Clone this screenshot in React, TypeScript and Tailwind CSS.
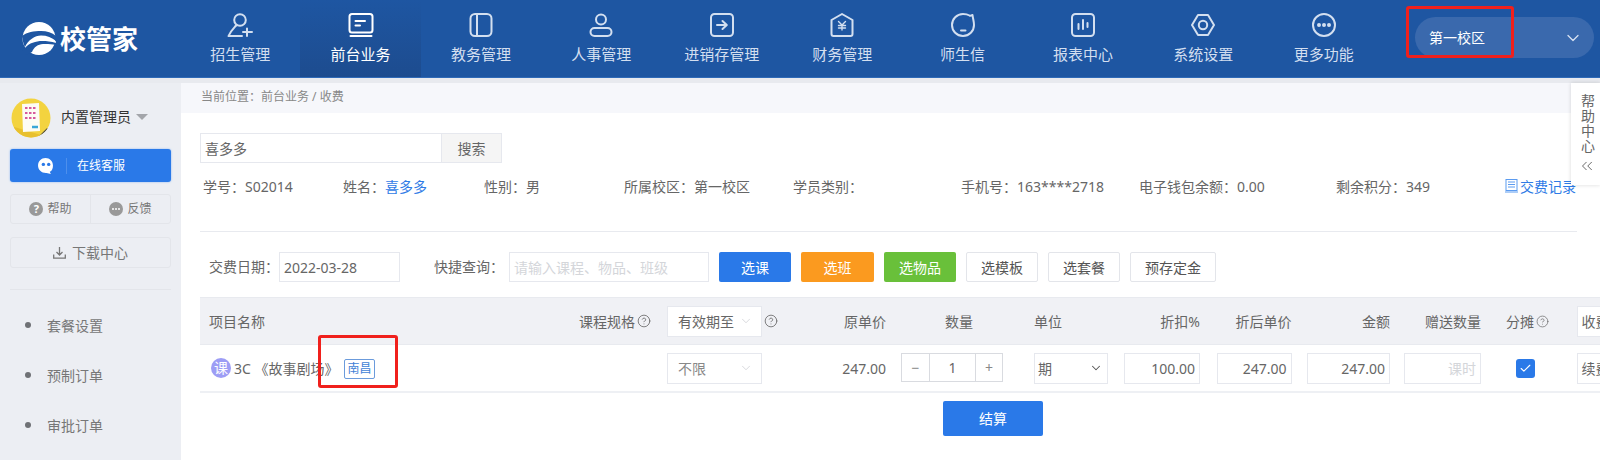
import { ChevronDown, ChevronsLeft, CircleHelp, Check } from "lucide-react";
import type { ReactNode } from "react";

const Svg = ({ children, w = 26 }: { children: ReactNode; w?: number }) => (
  <svg width={w} height={24} viewBox={`0 0 ${w} 24`} fill="none" stroke="currentColor" strokeWidth={2} strokeLinecap="round" strokeLinejoin="round">
    {children}
  </svg>
);

const navItems: { label: string; active?: boolean; icon: ReactNode }[] = [
  { label: "招生管理", icon: <Svg><circle cx="13" cy="7" r="5.8" /><path d="M9.5 12 C7 15 3.5 18 1.5 23 H15" /><path d="M20 15.5 V23 M16 19 H25" /></Svg> },
  { label: "前台业务", active: true, icon: <Svg><rect x="1.5" y="1" width="23" height="18.5" rx="2.5" /><path d="M7.5 8 H17 M7.5 12.5 H12" /><path d="M2.5 23 H23.5" /></Svg> },
  { label: "教务管理", icon: <Svg w={24}><rect x="1.5" y="1" width="21" height="22" rx="4.5" /><path d="M8 1.5 V22.5" /></Svg> },
  { label: "人事管理", icon: <Svg><circle cx="13" cy="6.5" r="5" /><rect x="2.5" y="15" width="21" height="8" rx="4" /></Svg> },
  { label: "进销存管理", icon: <Svg w={24}><rect x="1" y="1" width="22" height="22" rx="3.5" /><path d="M7 12 H16.5 M12.5 8 L16.8 12 L12.5 16" /></Svg> },
  { label: "财务管理", icon: <Svg w={24}><path d="M12 1 L22.5 7 V21 Q22.5 23 20.5 23 H3.5 Q1.5 23 1.5 21 V7 Z" /><path d="M8.5 8.5 L12 12 L15.5 8.5 M12 12 V17 M8.5 12.5 H15.5 M8.5 15 H15.5" strokeWidth={1.4} /></Svg> },
  { label: "师生信", icon: <Svg w={24}><path d="M18.5 2.5 C16.5 1.3 14.5 1 12 1 C5.8 1 1 6 1 12 C1 18 5.8 23 12 23 C18.2 23 23 18 23 12 C23 8.5 22 6 21.5 2 C20.5 2.5 19.5 3 18.5 2.5 Z" /><path d="M10 17.5 H14.5" /></Svg> },
  { label: "报表中心", icon: <Svg w={24}><rect x="1" y="1" width="22" height="22" rx="3.5" /><path d="M7.5 11 V16 M12 7 V16 M16.5 10 V14" /></Svg> },
  { label: "系统设置", icon: <Svg w={24}><path d="M7 2 H17 L23 12 L17 22 H7 L1 12 Z" /><circle cx="12" cy="12" r="4.2" /></Svg> },
  { label: "更多功能", icon: <Svg w={24}><circle cx="12" cy="12" r="11" /><circle cx="7" cy="12" r="1" fill="currentColor" /><circle cx="12" cy="12" r="1" fill="currentColor" /><circle cx="17" cy="12" r="1" fill="currentColor" /></Svg> },
];

const infos: [string, string, ReactNode?][] = [
  ["w-[140px]", "学号：S02014"],
  ["w-[141px]", "姓名：", <span className="text-[#2f7be6]">喜多多</span>],
  ["w-[140px]", "性别：男"],
  ["w-[169px]", "所属校区：第一校区"],
  ["w-[168px]", "学员类别："],
  ["w-[178px]", "手机号：163****2718"],
  ["w-[197px]", "电子钱包余额：0.00"],
  ["w-[169px]", "剩余积分：349"],
];

const cols = "grid grid-cols-[467px_114px_120px_133px_90px_93px_90px_97px_96px_76.5px_100px]";
const ctrl = "h-[31px] border border-[#e6e8ee] bg-white flex items-center text-[14px] text-[#666]";

const Btn = ({ c, w, children }: { c: string; w: string; children: ReactNode }) => (
  <button className={`${c} ${w} h-[30px] ml-[10px] rounded-[2px] text-[14px] shrink-0`}>{children}</button>
);

export default function App() {
  return (
    <div className="relative w-[1600px] h-[460px] overflow-hidden bg-white text-[#666] font-['Noto_Sans','Noto_Sans_CJK_SC',sans-serif]">
      {/* top bar */}
      <header className="h-[78px] bg-[#1e56a2] flex border-b border-[#2f6ab8]">
        <div className="w-[180px] flex items-center pl-[22px] shrink-0">
          <svg width="34" height="33" viewBox="0 0 34 33" className="shrink-0">
            <ellipse cx="17" cy="16.5" rx="16.5" ry="16.5" fill="#fff" />
            <path d="M0 14 C1 19 1 21 3 25 C6 18 13 13.5 19 13.5 C25 13.5 30 15.5 34 19 L34 14 C30 10.5 25 9 19 9 C12 9 5 10 0 14 Z" fill="#1e56a2" />
            <path d="M3 26 C7 21 14 19 20 19 C26 19 30 19.5 34 21 L34 19.5 C29 16.5 24 15.5 19 15.5 C12 15.5 6 20 3 26 Z" fill="#fff" />
            <path d="M3 26 C7 21 14 19 20 19 C25 19 29 19.5 34 21 L34 23 C29 22 25 21.8 21 22 C16 22.3 12 25 10 30 L4 33 L0 28 Z" fill="#1e56a2" />
          </svg>
          <span className="ml-[4px] text-[26px] font-bold text-white leading-none whitespace-nowrap">校管家</span>
        </div>
        <nav className="flex">
          {navItems.map((n) => (
            <div
              key={n.label}
              className={`w-[120.4px] flex flex-col items-center shrink-0 ${n.active ? "bg-gradient-to-b from-[#1e56a2] to-[#1d4c8f] text-white" : "text-[#d3dff0]"}`}
            >
              <div className="mt-[13px] h-[24px] flex items-center justify-center">{n.icon}</div>
              <div className="mt-[7px] h-[20px] leading-[20px] text-[15px] whitespace-nowrap">{n.label}</div>
            </div>
          ))}
        </nav>
        <div className="ml-[31px] mt-[17px] w-[179px] h-[41px] rounded-full bg-[#3a69ad] flex items-center justify-between pl-[14px] pr-[11px] text-white text-[14px] shrink-0">
          <span>第一校区</span>
          <ChevronDown size={20} strokeWidth={1.5} className="text-[#d8e2f2]" />
        </div>
      </header>
      <div className="h-[5px] bg-[#e8eaef]" />

      <div className="flex h-[377px]">
        {/* sidebar */}
        <aside className="w-[181px] shrink-0 bg-[#eceef3] px-[10px] pt-[15px]">
          <div className="flex items-center h-[40px] ml-[1px]">
            <svg width="40" height="40" viewBox="0 0 40 40" className="shrink-0">
              <defs><clipPath id="av"><circle cx="20" cy="20" r="19.5" /></clipPath></defs>
              <g clipPath="url(#av)">
                <rect width="40" height="40" fill="#f3d33f" />
                <path d="M0 28 L40 40 H0 Z" fill="#e8c02e" />
                <path d="M11 6 L28 5 L29 33 L12 34 Z" fill="#fdfcf4" />
                <path d="M14 10 h2.5 M18 10 h2.5 M22 10 h2.5 M14 15 h2.5 M18 15 h2.5 M22 15 h2.5 M14 20 h2.5 M18 20 h2.5 M22 20 h2.5" stroke="#d75a9c" strokeWidth="1.8" />
                <path d="M21 29 h6" stroke="#3aa7d8" strokeWidth="2.4" />
                <path d="M29 39 L37 31" stroke="#3d3d3d" strokeWidth="2.5" />
              </g>
            </svg>
            <span className="ml-[10px] -mt-[4px] text-[14px] text-[#333] whitespace-nowrap">内置管理员</span>
            <span className="ml-[5px] -mt-[2px] w-0 h-0 border-x-[6px] border-x-transparent border-t-[6px] border-t-[#a3a5aa]" />
          </div>

          <div className="mt-[11px] h-[33px] bg-[#2a79e8] rounded-[3px] flex items-center text-white text-[12px] shadow-[0_0_2px_#7fb0f2]">
            <div className="w-[57px] flex justify-end pr-[6px] -ml-[1px]">
              <svg width="15" height="16" viewBox="0 0 14 15" className="mr-[7px]">
                <path d="M7 0 C11 0 14 3 14 7 C14 10 13 12 11 13 L12 15 L8 14 C3.5 14.3 0 11 0 7 C0 3 3 0 7 0 Z" fill="#fff" />
                <circle cx="5" cy="6" r="1.6" fill="#2a79e8" />
                <circle cx="10" cy="6" r="1.6" fill="#2a79e8" />
              </svg>
            </div>
            <div className="w-px h-[16px] bg-[#4d8fec]" />
            <span className="ml-[10px]">在线客服</span>
          </div>

          <div className="mt-[12px] h-[30px] border border-[#e3e5ea] rounded-[3px] flex text-[12px] text-[#777]">
            <div className="w-[80px] flex items-center justify-center gap-[4px] border-r border-[#e3e5ea]">
              <span className="w-[14px] h-[14px] rounded-full bg-[#999] text-white text-[11px] font-bold leading-[14px] text-center">?</span>
              <span>帮助</span>
            </div>
            <div className="flex-1 flex items-center justify-center gap-[4px]">
              <span className="w-[14px] h-[14px] rounded-full bg-[#999] flex items-center justify-center gap-[1px]">
                <i className="w-[2px] h-[2px] rounded-full bg-white" />
                <i className="w-[2px] h-[2px] rounded-full bg-white" />
                <i className="w-[2px] h-[2px] rounded-full bg-white" />
              </span>
              <span>反馈</span>
            </div>
          </div>

          <div className="mt-[13px] h-[31px] border border-[#e3e5ea] rounded-[3px] flex items-center justify-center gap-[6px] text-[14px] text-[#777]">
            <svg width="13" height="13" viewBox="0 0 13 13" fill="none" stroke="#777" strokeWidth="1.3">
              <path d="M6.5 1 V8.5 M3.5 6 L6.5 9 L9.5 6 M0.7 8.5 V12.2 H12.3 V8.5" />
            </svg>
            <span>下载中心</span>
          </div>

          <div className="mt-[21px] h-px bg-[#e3e5ea]" />

          <ul className="mt-[10px] text-[14px] text-[#777]">
            {["套餐设置", "预制订单", "审批订单"].map((t) => (
              <li key={t} className="h-[50px] flex items-center pl-[15px] gap-[16px]">
                <span className="w-[6px] h-[6px] rounded-full bg-[#6f7175]" />
                <span>{t}</span>
              </li>
            ))}
          </ul>
        </aside>

        {/* main */}
        <main className="flex-1 min-w-0 overflow-hidden">
          <div className="h-[30px] bg-[#f6f7fb] pl-[20px] pb-[2px] flex items-center text-[12px] text-[#888]">当前位置：前台业务 / 收费</div>
          <div className="pl-[19px]">
            <div className="mt-[20px] flex h-[30px] w-[302px] border border-[#e6e8ee] text-[14px]">
              <div className="flex-1 flex items-center pl-[4px] text-[#666]">喜多多</div>
              <div className="w-[60px] bg-[#f5f5f5] border-l border-[#e6e8ee] flex items-center justify-center text-[#666]">搜索</div>
            </div>

            <div className="mt-[13px] h-[20px] pl-[3px] flex items-center text-[14px] text-[#666] whitespace-nowrap">
              {infos.map(([w, t, extra]) => (
                <div key={t} className={`${w} shrink-0`}>{t}{extra}</div>
              ))}
              <div className="flex items-center gap-[2px] text-[#2f7be6]">
                <svg width="13" height="14" viewBox="0 0 13 14" fill="none" stroke="#5b9bf0" strokeWidth="1">
                  <rect x="1" y="0.5" width="11" height="11" />
                  <path d="M3 3 H10 M3 5.5 H10 M3 8 H10 M0 13 H13" />
                </svg>
                <span>交费记录</span>
              </div>
            </div>

            <div className="mt-[35px] h-px w-[1377px] bg-[#e8eaef]" />

            <div className="mt-[20px] h-[30px] flex items-center text-[14px] text-[#666] whitespace-nowrap">
              <span className="ml-[9px] w-[70px] shrink-0 -mt-[1px]">交费日期：</span>
              <div className="w-[121px] h-[30px] border border-[#e6e8ee] flex items-center pl-[4px] shrink-0">2022-03-28</div>
              <span className="ml-[34px] w-[75px] shrink-0 -mt-[1px]">快捷查询：</span>
              <div className="w-[200px] h-[30px] border border-[#e6e8ee] flex items-center pl-[4px] text-[#d4d6da] shrink-0">请输入课程、物品、班级</div>
              <Btn c="bg-[#2a79e8] text-white" w="w-[72px]">选课</Btn>
              <Btn c="bg-[#fb9a1f] text-white" w="w-[73px]">选班</Btn>
              <Btn c="bg-[#69c03a] text-white" w="w-[72px]">选物品</Btn>
              <Btn c="bg-white border border-[#e3e5ea] text-[#555]" w="w-[72px]">选模板</Btn>
              <Btn c="bg-white border border-[#e3e5ea] text-[#555]" w="w-[72px]">选套餐</Btn>
              <Btn c="bg-white border border-[#e3e5ea] text-[#555]" w="w-[86px]">预存定金</Btn>
            </div>

            {/* table */}
            <div className="mt-[15px] text-[14px] text-[#666] whitespace-nowrap">
              <div className={`${cols} h-[48px] items-center bg-[#f0f1f5] border-t border-b border-[#e8eaef]`}>
                <div className="flex items-center justify-between pl-[9px] pr-[16px]">
                  <span>项目名称</span>
                  <span className="flex items-center gap-[2px]">课程规格<CircleHelp size={14} strokeWidth={1.4} /></span>
                </div>
                <div className="flex items-center gap-[2px]">
                  <div className={`${ctrl} w-[95px] h-[30px] pl-[10px] pr-[8px] justify-between`}>
                    <span>有效期至</span><ChevronDown size={14} strokeWidth={1.2} className="text-[#c8cad0]" />
                  </div>
                  <CircleHelp size={14} strokeWidth={1.4} />
                </div>
                <div className="text-right pr-[15px]">原单价</div>
                <div className="pl-[44px]">数量</div>
                <div>单位</div>
                <div className="w-[76px] text-right">折扣%</div>
                <div className="w-[74.5px] text-right">折后单价</div>
                <div className="w-[83px] text-right">金额</div>
                <div className="w-[77px] text-right">赠送数量</div>
                <div className="pl-[6px] flex items-center gap-[2px]">分摊<CircleHelp size={13} strokeWidth={1.3} /></div>
                <div className={`${ctrl} w-[100px] h-[30px] pl-[4px]`}>收费类型</div>
              </div>

              <div className={`${cols} h-[48px] items-center border-b-2 border-[#eef0f4]`}>
                <div className="flex items-center pl-[11px]">
                  <span className="w-[20px] h-[20px] rounded-full bg-[#9d9df5] text-white text-[14px] leading-[20px] text-center shrink-0">课</span>
                  <span className="ml-[3px] w-[110px]">3C 《故事剧场》</span>
                  <span className="mt-[1px] h-[20px] w-[31px] border border-[#6b9bdc] rounded-[2px] text-[#3f7fd6] text-[12px] leading-[18px] text-center">南昌</span>
                </div>
                <div>
                  <div className={`${ctrl} w-[95px] pl-[10px] pr-[8px] justify-between text-[#888]`}>
                    <span>不限</span><ChevronDown size={14} strokeWidth={1.2} className="text-[#c8cad0]" />
                  </div>
                </div>
                <div className="text-right pr-[15px]">247.00</div>
                <div className="flex h-[29px] w-[102px] border border-[#d9dbe0] -mt-[2px]">
                  <div className="w-[28px] flex items-center justify-center text-[#888] border-r border-[#d9dbe0]">−</div>
                  <div className="flex-1 flex items-center justify-center">1</div>
                  <div className="w-[27px] flex items-center justify-center text-[#888] border-l border-[#d9dbe0]">+</div>
                </div>
                <div className={`${ctrl} w-[74px] pl-[3px] pr-[4px] justify-between text-[#555]`}>
                  <span>期</span><ChevronDown size={14} strokeWidth={1.8} className="text-[#555]" />
                </div>
                <div className={`${ctrl} w-[76px] justify-end pr-[4px]`}>100.00</div>
                <div className={`${ctrl} w-[74.5px] justify-end pr-[4px]`}>247.00</div>
                <div className={`${ctrl} w-[83px] justify-end pr-[4px]`}>247.00</div>
                <div className={`${ctrl} w-[77px] justify-end pr-[4px] text-[#d4d6da]`}>课时</div>
                <div className="pl-[16px]">
                  <div className="w-[19px] h-[19px] rounded-[3px] bg-[#2a79e8] flex items-center justify-center">
                    <Check size={13} strokeWidth={2} className="text-white" />
                  </div>
                </div>
                <div className={`${ctrl} w-[100px] pl-[4px]`}>续费</div>
              </div>
            </div>

            <div className="mt-[8px] ml-[743px] w-[100px] h-[35px] bg-[#2a79e8] rounded-[2px] text-white text-[14px] flex items-center justify-center">结算</div>
          </div>
        </main>
      </div>

      {/* help tab */}
      <div className="absolute left-[1571px] top-[83px] w-[29px] h-[102px] bg-white shadow-[0_0_4px_rgba(0,0,0,0.15)] flex flex-col items-center pt-[11px] pl-[3px] text-[14px] text-[#666]">
        <span className="[writing-mode:vertical-rl] tracking-[1px] leading-[14px]">帮助中心</span>
        <ChevronsLeft size={18} strokeWidth={1.3} className="mt-[3px] -ml-[1px]" />
      </div>

      {/* red annotation boxes */}
      <div className="absolute left-[1406px] top-[6px] w-[108px] h-[52px] border-[3px] border-[#f0201c] rounded-[3px]" />
      <div className="absolute left-[318px] top-[335px] w-[80px] h-[53px] border-[3px] border-[#f0201c] rounded-[3px]" />
    </div>
  );
}
